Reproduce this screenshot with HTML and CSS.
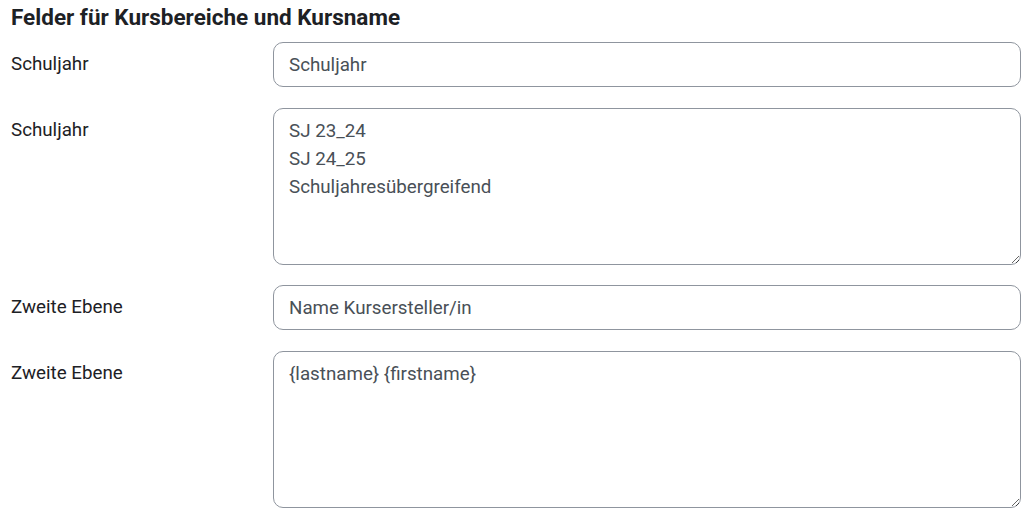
FILE: index.html
```html
<!DOCTYPE html>
<html lang="de">
<head>
<meta charset="utf-8">
<title>Felder für Kursbereiche und Kursname</title>
<link rel="stylesheet" href="styles.css">
</head>
<body>
<div class="page">
  <h3 class="heading">Felder für Kursbereiche und Kursname</h3>
  <div class="row row-input">
    <label class="label" for="f1">Schuljahr</label>
    <input class="field" id="f1" type="text" value="Schuljahr">
  </div>
  <div class="row row-area">
    <label class="label" for="f2">Schuljahr</label>
    <textarea class="area" id="f2">SJ 23_24
SJ 24_25
Schuljahresübergreifend</textarea>
  </div>
  <div class="row row-input">
    <label class="label" for="f3">Zweite Ebene</label>
    <input class="field" id="f3" type="text" value="Name Kursersteller/in">
  </div>
  <div class="row">
    <label class="label" for="f4">Zweite Ebene</label>
    <textarea class="area" id="f4">{lastname} {firstname}</textarea>
  </div>
</div>
</body>
</html>
```
FILE: styles.css
```css
html, body {
  margin: 0;
  padding: 0;
  background: #ffffff;
}
.page {
  padding: 4px 10px 0 11px;
  font-family: Roboto, "Liberation Sans", sans-serif;
  color: #1d2125;
}
.heading {
  margin: 0 0 11px 0;
  font-size: 22.5px;
  font-weight: 700;
  line-height: 27px;
  color: #1d2125;
}
.row {
  display: grid;
  grid-template-columns: 262px 1fr;
  align-items: start;
}
.row-input {
  margin-bottom: 21px;
}
.row-area {
  margin-bottom: 20px;
}
.label {
  font-size: 18.75px;
  line-height: 28px;
  padding-top: 8px;
  color: #1d2125;
}
.field, .area {
  box-sizing: border-box;
  width: 100%;
  margin: 0;
  border: 1px solid #8f959e;
  border-radius: 10px;
  background: #ffffff;
  font-family: Roboto, "Liberation Sans", sans-serif;
  font-size: 18.75px;
  color: #495057;
  outline: none;
}
.field {
  height: 45px;
  padding: 0 15px;
  line-height: 43px;
}
.area {
  display: block;
  height: 157px;
  padding: 8px 15px;
  line-height: 28px;
  resize: vertical;
}
```
